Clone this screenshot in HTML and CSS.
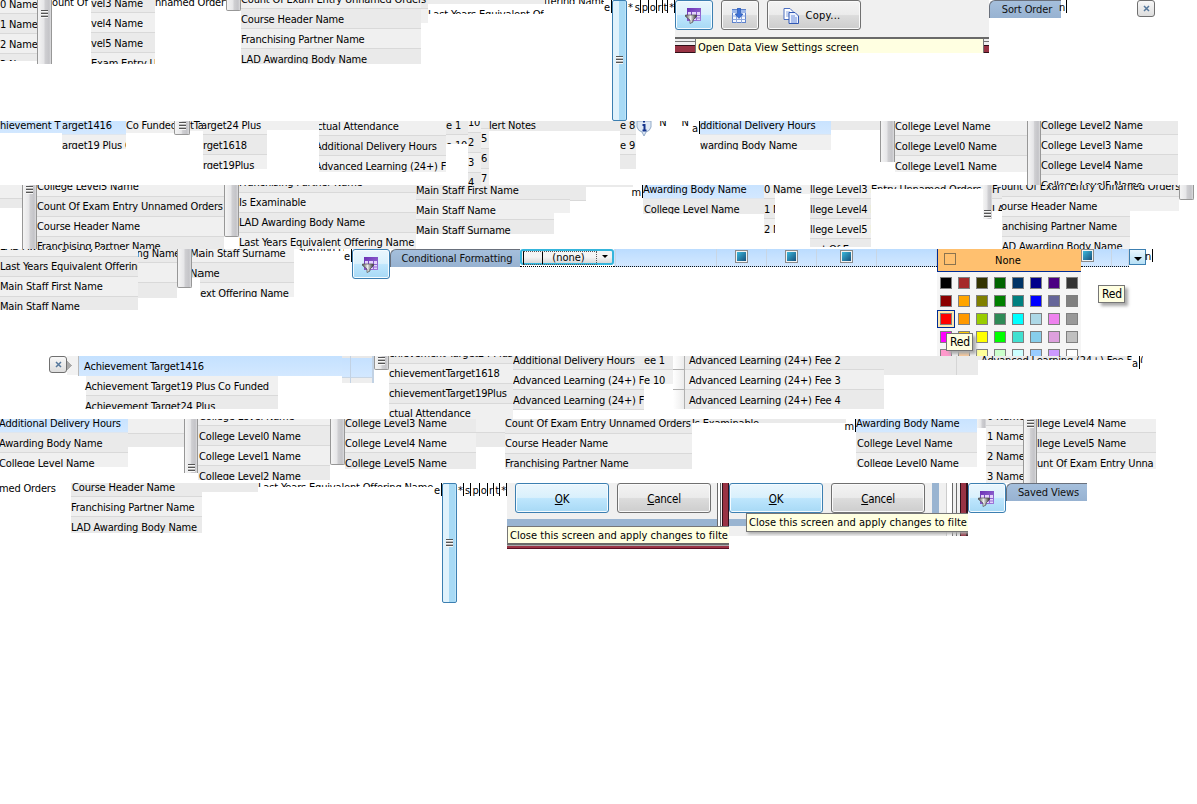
FILE: index.html
```html
<!DOCTYPE html>
<html lang="en">
<head>
<meta charset="utf-8">
<title>Data view filter parts</title>
<link rel="stylesheet" href="styles.css">
</head>
<body>
<svg width="0" height="0" class="defs">
  <defs>
    <linearGradient id="purple" x1="0" y1="0" x2="1" y2="1"><stop offset="0" stop-color="#6a2fb4"/><stop offset="1" stop-color="#9f7bdc"/></linearGradient>
    <linearGradient id="steel" x1="0" x2="1"><stop offset="0" stop-color="#555"/><stop offset=".45" stop-color="#eee"/><stop offset="1" stop-color="#333"/></linearGradient>
    <symbol id="filter" viewBox="0 0 16 16">
      <rect x="2" y="0" width="14" height="13" fill="url(#purple)"/>
      <path d="M3 4h3v3H3zM7 4h4v3H7zM12 4h3v3h-3zM12 8h3v1.500h-3zM12 10.500h3v1.500h-3zM8 10.500h3v1.500H8z" fill="#e3d3fa"/>
      <path d="M.5 7h11v1.500L8 12v2l-3 1.500V12L.5 8.500z" fill="url(#steel)" stroke="#4a4a4a" stroke-width=".7"/>
    </symbol>
    <symbol id="import" viewBox="0 0 16 16">
      <rect x="1.500" y="1.500" width="13" height="13" fill="#f4f8ff" stroke="#5f83cc"/>
      <path d="M1 2h14v3H1z" fill="#9db8ea"/>
      <path d="M1.500 8h13M1.500 11.500h13M5.500 5v10M10.500 5v10" stroke="#8da7dd"/>
      <path d="M6.500 0h3v6h2.500L8 10.500 4 6h2.500z" fill="#3f72d8" stroke="#2450a8" stroke-width=".6"/>
    </symbol>
    <symbol id="copy" viewBox="0 0 16 16">
      <path d="M1 .500h6l3 3v8H1z" fill="#fff" stroke="#4c6fc0"/>
      <path d="M3 4h4M3 6h5M3 8h5" stroke="#8da7e0"/>
      <path d="M6 4.500h6l3.500 3.500v7.500H6z" fill="#eef3ff" stroke="#3158b4"/>
      <path d="M8 8h4M8 10h6M8 12h6M8 14h6" stroke="#6a8cda"/>
    </symbol>
  </defs>
</svg>
<main class="sheet">

<section class="strip s0">
  <div class="tile h61"><div class="list alt u6"><p>0 Name</p><p>1 Name</p><p>2 Name</p><p>3 Name</p></div></div>
  <div class="bar h64"><i class="grip d9"></i></div>
  <div class="tile h6"><div class="list bare u8"><p>ount Of E</p></div></div>
  <div class="tile h64"><div class="list u7"><p>vel3 Name</p><p>vel4 Name</p><p>vel5 Name</p><p>Exam Entry Un</p></div></div>
  <div class="tile h6"><div class="list bare u8"><p>nnamed Order<sup>s</sup></p></div></div>
  <div class="bar end h11"></div>
  <div class="tile h64"><div class="list alt u11"><p>Count Of Exam Entry Unnamed Orders</p><p>Course Header Name</p><p>Franchising Partner Name</p><p>LAD Awarding Body Name</p></div></div>
  <div class="tile h23"><div class="list u11"><p>s</p><p></p></div></div>
  <div class="tile h14 capped"><div class="list bare"><p>Last Years Equivalent Of</p></div></div>
  <div class="tile h4"><div class="list bare u9"><p>ffering Name</p></div></div>
  <div class="caret"><b>e</b></div>
  <div class="bar blue h121"><i class="grip d56"></i></div>
  <div class="caret keys"><b class="no">*</b><b>s</b><b>p</b><b>o</b><b>r</b><b>t</b><b>*</b></div>
  <div class="toolbar">
    <div class="tools"><span class="btn hot w38"><svg class="ic"><use href="#filter"/></svg></span><span class="btn w38"><svg class="ic"><use href="#import"/></svg></span><span class="btn w94 copy"><svg class="ic"><use href="#copy"/></svg>Copy...</span></div>
    <div class="under"><div class="tip flat">Open Data View Settings screen</div></div>
  </div>
  <div class="tab">Sort Order</div>
  <div class="caret"><b>n</b></div>
  <div></div>
  <div class="close"><svg viewBox="0 0 7 7"><path d="M1 1l5 5M6 1L1 6"/></svg></div>
</section>

<section class="strip s1">
  <div class="tile h12"><div class="list u6"><p class="on">hievement T</p></div></div>
  <div class="tile h28"><div class="list u6"><p class="on">arget1416</p><p>arget19 Plus C</p></div></div>
  <div class="tile h12"><div class="list alt u6"><p>Co Funded</p></div></div>
  <div class="bar end h14"><i class="grip"></i></div>
  <div class="tile h10"><div class="list alt u6"><p>tTa</p></div></div>
  <div class="tile h48"><div class="list alt u6"><p class="n2">arget24 Plus</p><p>rget1618</p><p>rget19Plus</p></div></div>
  <div class="tile h9"><div class="list alt u5"><p></p></div></div>
  <div class="tile h51"><div class="list alt u5"><p class="n2">ctual Attendance</p><p class="n3">Additional Delivery Hours</p><p class="n3">Advanced Learning (24+) Fee</p></div></div>
  <div class="tile h23"><div class="list u6"><p>e 1</p><p>e 10</p></div></div>
  <div class="tile h64"><div class="list alt tight u8"><p>10</p><p>2</p><p>3</p><p>4</p></div></div>
  <div class="tile h64"><div class="list tight u12"><p>*</p><p>5</p><p>6</p><p>7</p></div></div>
  <div class="tile h10"><div class="list u6"><p>lert Notes</p></div></div>
  <div class="tile h48"><div class="list u6"><p>e 8</p><p>e 9</p><p></p></div></div>
  <div class="info"><svg viewBox="0 0 16 16"><path d="M1 0h14v6q-1 4-5 5l-2 4-2-4Q2 10 1 6z" fill="#dfe9f5" stroke="#93abc8"/><path d="M8 0v1.500M6.500 4H8.500v6M6.500 9.500h4" stroke="#14348c" stroke-width="2" fill="none"/></svg></div>
  <div class="tile h5"><div class="list bare u9"><p>" N &nbsp; &nbsp; N</p></div></div>
  <div class="caret"><b>a</b></div>
  <div class="tile h29"><div class="list u6"><p class="on">dditional Delivery Hours</p><p>warding Body Name</p></div></div>
  <div class="tile h9"><div class="list u5"><p></p></div></div>
  <div class="bar h41"></div>
  <div class="tile h51"><div class="list alt u5"><p>College Level Name</p><p>College Level0 Name</p><p>College Level1 Name</p></div></div>
  <div class="bar h64"></div>
  <div class="tile h64"><div class="list u6"><p>College Level2 Name</p><p>College Level3 Name</p><p>College Level4 Name</p><p>College Level5 Name</p></div></div>
</section>

<section class="strip s2">
  <div class="tile h23"><div class="list alt u6"><p></p><p></p></div></div>
  <div class="bar h64"><i class="grip"></i></div>
  <div class="tile h64"><div class="list alt tight u8"><p>College Level5 Name</p><p>Count Of Exam Entry Unnamed Orders</p><p>Course Header Name</p><p>Franchising Partner Name</p></div></div>
  <div class="bar end h52"></div>
  <div class="tile h64"><div class="list tight u12"><p>Franchising Partner Name</p><p>Is Examinable</p><p>LAD Awarding Body Name</p><p>Last Years Equivalent Offering Name</p></div></div>
  <div class="tile h49"><div class="list u5"><p>Main Staff First Name</p><p>Main Staff Name</p><p>Main Staff Surname</p></div></div>
  <div class="tile h28"><div class="list u5"><p></p><p></p></div></div>
  <div class="tile h16"><div class="list u4"><p></p></div></div>
  <div class="tile h2"><div class="list u5"><p></p></div></div>
  <div class="caret"><b>m</b></div>
  <div class="tile h29"><div class="list alt u6"><p class="on">Awarding Body Name</p><p class="p1">College Level Name</p></div></div>
  <div class="tile h48"><div class="list alt u6"><p>0 Name</p><p>1 Name</p><p>2 Name</p></div></div>
  <div class="tile h9"><div class="list alt u6"><p class="n11">0 Name</p></div></div>
  <div class="tile h62"><div class="list alt u6"><p>llege Level3 Name</p><p>llege Level4 Name</p><p>llege Level5 Name</p><p>unt Of Exam</p></div></div>
  <div class="tile h4"><div class="list alt u6"><p>Entry Unnamed Orders</p></div></div>
  <div class="bar slim h34"><i class="grip d25"></i></div>
  <div class="tile h26"><div class="list u6"><p>Fr</p><p>LA</p></div></div>
  <div class="tile h64"><div class="list tight u8"><p class="n1">ount Of Exam Entry Unnamed Orders</p><p class="n1">ourse Header Name</p><p>anchising Partner Name</p><p>AD Awarding Body Name</p></div></div>
  <div class="tile h26"><div class="list tight u8"><p class="n128">ount Of Exam Entry Unnamed Orders</p><p></p></div></div>
  <div class="bar end h15"></div>
</section>

<section class="strip s3">
  <div class="tile h61"><div class="list alt tight u12"><p>LAD Awarding Body Name</p><p>Last Years Equivalent Offering</p><p>Main Staff First Name</p><p>Main Staff Name</p></div></div>
  <div class="tile h49"><div class="list u6"><p class="n3">ing Name</p><p></p><p></p></div></div>
  <div class="bar end h39"></div>
  <div class="tile h29"><div class="list alt u6"><p class="n2">Main</p><p class="n2">Name</p></div></div>
  <div class="tile h48"><div class="list alt u6"><p class="n10">Main Staff Surname</p><p class="n10">Name</p><p class="n6">Next Offering Name</p></div></div>
  <div class="tile h2"><div class="list bare u10"><p class="p3">Starting Date</p></div></div>
  <div class="caret"><b>e</b></div>
  <span class="btn hot"><svg class="ic"><use href="#filter"/></svg></span>
  <div class="tab">Conditional Formatting</div>
  <div class="combo-cell"><div class="combo"><span>(none)</span></div></div>
  <div class="gridrow main"><i></i><i></i><i><s></s></i><i><s></s></i><i><s></s></i><i></i></div>
  <div class="palette">
    <div class="none"><i></i><span>None</span></div>
    <div class="swatches">
      <i class="c01"></i><i class="c02"></i><i class="c03"></i><i class="c04"></i><i class="c05"></i><i class="c06"></i><i class="c07"></i><i class="c08"></i>
      <i class="c09"></i><i class="c10"></i><i class="c11"></i><i class="c12"></i><i class="c13"></i><i class="c14"></i><i class="c15"></i><i class="c16"></i>
      <i class="c17 picked"></i><i class="c18"></i><i class="c19"></i><i class="c20"></i><i class="c21"></i><i class="c22"></i><i class="c23"></i><i class="c24"></i>
      <i class="c25"></i><i class="c26"></i><i class="c27"></i><i class="c28"></i><i class="c29"></i><i class="c30"></i><i class="c31"></i><i class="c32"></i>
      <i class="c33"></i><i class="c34"></i><i class="c35"></i><i class="c36"></i><i class="c37"></i><i class="c38"></i><i class="c39"></i><i class="c40"></i>
    </div>
    <div class="tip small over">Red</div>
  </div>
  <div class="tailcell"><div class="gridrow tail"><i><s></s></i><i></i></div><div class="tip small alone">Red</div></div>
  <div class="drop"></div>
  <div class="caret"><b>n</b></div>
</section>

<section class="strip s4">
  <div></div>
  <div class="close"><svg viewBox="0 0 7 7"><path d="M1 1l5 5M6 1L1 6"/></svg></div>
  <div class="marker"></div>
  <div class="tile h53 wide1"><div class="list"><p class="on first">Achievement Target1416</p><p>Achievement Target19 Plus Co Funded</p><p>Achievement Target24 Plus</p></div></div>
  <div class="cells"></div>
  <div class="bar end h14"><i class="grip"></i></div>
  <div class="tile h63"><div class="list tight u12"><p>chievement Target24 Plus</p><p>chievementTarget1618</p><p>chievementTarget19Plus</p><p>ctual Attendance</p></div></div>
  <div class="tile h54"><div class="list u6"><p>Additional Delivery Hours</p><p>Advanced Learning (24+) Fee 10</p><p>Advanced Learning (24+) F</p></div></div>
  <div class="tile h28"><div class="list u6"><p>ee 1</p><p>e 10</p></div></div>
  <div class="nubs"><i></i><i></i><i></i></div>
  <div class="tile h53"><div class="list u6"><p class="p4">Advanced Learning (24+) Fee 2</p><p class="p4">Advanced Learning (24+) Fee 3</p><p class="p4">Advanced Learning (24+) Fee 4</p></div></div>
  <div class="slab"></div>
  <div class="tile h4"><div class="list u6"><p class="p3">Advanced Learning (24+) Fee 5</p></div></div>
  <div class="caret"><b>a</b></div>
  <div class="tile h7"><div class="list bare u6"><p>(</p></div></div>
</section>

<section class="strip s5">
  <div class="tile h48"><div class="list alt u6"><p class="on n1">Additional Delivery Hours</p><p class="n1">Awarding Body Name</p><p class="n1">College Level Name</p></div></div>
  <div class="tile h28"><div class="list alt u5"><p></p><p></p></div></div>
  <div class="bar h54"><i class="grip d45"></i></div>
  <div class="tile h61"><div class="list alt u13"><p class="p1">College Level Name</p><p class="p1">College Level0 Name</p><p class="p1">College Level1 Name</p><p class="p1">College Level2 Name</p></div></div>
  <div class="bar end h46"></div>
  <div class="tile h50"><div class="list u6"><p>College Level3 Name</p><p>College Level4 Name</p><p>College Level5 Name</p></div></div>
  <div class="tile h28"><div class="list alt u6"><p></p><p></p></div></div>
  <div class="tile h50"><div class="list tight u5"><p>Count Of Exam Entry Unnamed Orders</p><p>Course Header Name</p><p>Franchising Partner Name</p></div></div>
  <div class="tile h4"><div class="list u6"><p>Is Examinable</p></div></div>
  <div class="caret"><b>m</b></div>
  <div class="tile h48"><div class="list alt u6"><p class="on">Awarding Body Name</p><p class="p1">College Level Name</p><p class="p1">College Level0 Name</p></div></div>
  <div class="bar slim h9"></div>
  <div class="tile h64"><div class="list u13"><p class="p1">0 Name</p><p class="p1">1 Name</p><p class="p1">2 Name</p><p class="p1">3 Name</p></div></div>
  <div class="bar h64"><i class="grip"></i></div>
  <div class="tile h50"><div class="list alt u6"><p>llege Level4 Name</p><p>llege Level5 Name</p><p>unt Of Exam Entry Unna</p></div></div>
</section>

<section class="strip s6">
  <div class="tile h12"><div class="list bare u5"><p class="n1">med Orders</p></div></div>
  <div class="tile h50"><div class="list u6"><p class="p1">Course Header Name</p><p>Franchising Partner Name</p><p>LAD Awarding Body Name</p></div></div>
  <div class="tile h9"><div class="list u6"><p></p></div></div>
  <div class="tile h4"><div class="list bare u6"><p>Last Years Equivalent Offering Name</p></div></div>
  <div class="caret"><b>e</b></div>
  <div class="bar blue h120"><i class="grip d56"></i></div>
  <div class="caret keys"><b>*</b><b>s</b><b>p</b><b>o</b><b>r</b><b>t</b><b>*</b></div>
  <div class="dialog one"><div class="tools"><span class="btn hot w94"><span><u>O</u>K</span></span><span class="btn w94"><span><u>C</u>ancel</span></span></div><div class="band"></div><div class="tip row">Close this screen and apply changes to filte</div><div class="edge"></div><div class="stripes"></div></div>
  <div class="dialog two"><div class="tools"><span class="btn hot w94"><span><u>O</u>K</span></span><span class="btn w94"><span><u>C</u>ancel</span></span></div><div class="band"></div><div class="vband"></div><div class="stripes"></div><div class="tip over2">Close this screen and apply changes to filte</div></div>
  <span class="btn hot"><svg class="ic"><use href="#filter"/></svg></span>
  <div class="tab">Saved Views</div>
</section>
</main>
</body>
</html>
```
FILE: styles.css
```css
* { box-sizing: border-box; }
body { margin: 0; background: #fff; color: #000; font: 11px/19px "DejaVu Sans Condensed", "DejaVu Sans", sans-serif; letter-spacing: -0.17px; overflow: hidden; }
p { margin: 0; }
i, s, b { font-style: normal; text-decoration: none; font-weight: normal; }
.defs { display: block; width: 0; height: 0; }
.sheet { width: 1197px; height: 804px; overflow: hidden; }

.strip { display: grid; align-items: start; overflow: hidden; }
.s0 { height: 121px; grid-template-columns: 37px 15px 39px 64px 71px 15px 180px 7px 116px 60px 8px 15px 48px 314px 72px 6px 70px 18px; }
.s1 { height: 64px; grid-template-columns: 62px 64px 48px 16px 13px 64px 52px 127px 22px 13px 8px 131px 16px 16px 41px 7px 131px 49px 15px 132px 14px 137px; }
.s2 { height: 64px; grid-template-columns: 22px 15px 187px 15px 177px 138px 16px 16px 47px 10px 121px 11px 35px 61px 112px 9px 10px 128px 49px 15px; }
.s3 { height: 107px; grid-template-columns: 138px 39px 15px 8px 94px 50px 8px 38px 130px 94px 323px 144px 48px 17px 7px; }
.s4 { height: 63px; grid-template-columns: 49px 18px 11px 264px 32px 15px 124px 131px 29px 12px 199px 94px 154px 8px 3px; }
.s5 { height: 64px; grid-template-columns: 128px 56px 14px 132px 15px 131px 29px 187px 154px 10px 121px 9px 37px 14px 119px; }
.s6 { height: 121px; grid-template-columns: 71px 131px 56px 176px 8px 15px 50px 222px 239px 38px 81px; }

/* clipped list fragments */
.tile { overflow: hidden; white-space: nowrap; min-width: 0; }
.list { display: flex; flex-direction: column; line-height: 21px; }
.list.tight { line-height: 19px; }
.list p { height: 20px; flex: none; border-bottom: 1px solid #d9d9d9; background: #eaeaea; }
.list p:nth-child(even), .list.alt p { background: #f0f0f0; }
.list.alt p:nth-child(even) { background: #eaeaea; }
.list.bare p { background: #fff; border-color: #fff; }
.list p.on { background: linear-gradient(#c4e1ff, #d3e8ff); border-color: #dfe6ee; }
.list sup { font-size: 9px; line-height: 1px; }
.capped { border-top: 4px solid #ececec; }
.p1 { padding-left: 1px; }
.p3 { padding-left: 3px; }
.p4 { padding-left: 4px; }
.n1 { text-indent: -1px; }
.n2 { text-indent: -2px; }
.n3 { text-indent: -4px; }
.n6 { text-indent: -7px; }
.n10 { text-indent: -9px; }
.n11 { text-indent: -11px; }
.n128 { text-indent: -129px; }

.u4 { margin-top: -4px; }
.u5 { margin-top: -5px; }
.u6 { margin-top: -6px; }
.u7 { margin-top: -7px; }
.u8 { margin-top: -8px; }
.u9 { margin-top: -9px; }
.u10 { margin-top: -10px; }
.u11 { margin-top: -11px; }
.u12 { margin-top: -12px; }
.u13 { margin-top: -13px; }
.h2 { height: 2px; }
.h4 { height: 4px; }
.h5 { height: 5px; }
.h6 { height: 6px; }
.h7 { height: 7px; }
.h9 { height: 9px; }
.h10 { height: 10px; }
.h11 { height: 11px; }
.h12 { height: 12px; }
.h14 { height: 14px; }
.h15 { height: 15px; }
.h16 { height: 16px; }
.h23 { height: 23px; }
.h26 { height: 26px; }
.h28 { height: 28px; }
.h29 { height: 29px; }
.h34 { height: 34px; }
.h39 { height: 39px; }
.h41 { height: 41px; }
.h46 { height: 46px; }
.h48 { height: 48px; }
.h49 { height: 49px; }
.h50 { height: 50px; }
.h51 { height: 51px; }
.h52 { height: 52px; }
.h53 { height: 53px; }
.h54 { height: 54px; }
.h61 { height: 61px; }
.h62 { height: 62px; }
.h63 { height: 63px; }
.h64 { height: 64px; }
.h120 { height: 120px; }
.h121 { height: 121px; }

/* scrollbars */
.bar { display: flex; justify-content: center; overflow: hidden; border: solid #979797; border-width: 0 1px; background: linear-gradient(90deg, #f4f4f4, #e6e6e8 45%, #cfcfd2 55%, #c4c4c8 85%, #dcdcde); }
.bar.end { border-bottom-width: 1px; border-radius: 0 0 2px 2px; }
.bar.slim { border-width: 0; }
.bar.blue { border: 1px solid #3c7fb1; border-radius: 2px; background: linear-gradient(90deg, #e0f2fc 45%, #a8daf5 50%, #a8daf5 90%, #d0ecfa); }
.grip { flex: none; width: 7px; height: 8px; margin-top: 1px; background: repeating-linear-gradient(#555 0 1px, #f8f8f8 1px 2px, #bbb 2px 3px); }
.grip.d9 { margin-top: 10px; }
.grip.d25 { margin-top: 25px; }
.grip.d45 { margin-top: 45px; }
.grip.d56 { margin-top: 55px; }

/* typed characters with their text cursors */
.caret { display: flex; justify-content: flex-end; height: 17px; margin-top: -2px; }
.caret b { background: linear-gradient(#000, #000) 100% 2px / 1px 13px no-repeat; padding-right: 2px; }
.caret.keys { justify-content: space-between; padding-left: 1px; }
.caret.keys b { padding-right: 1px; }
.caret b.no { background: none; }

/* buttons */
.btn { display: flex; align-items: center; justify-content: center; gap: 5px; height: 30px; line-height: 16px; border: 1px solid #707070; border-radius: 3px; background: linear-gradient(#f3f3f3, #ebebeb 48%, #dcdcdc 52%, #cdcdcd); box-shadow: inset 0 0 0 1px #fafafa; letter-spacing: 0; padding-top: 1px; }
.btn.hot { border-color: #3c7fb1; background: linear-gradient(#eaf6fd, #d9f0fc 48%, #bee6fd 52%, #a7d9f5); box-shadow: inset 0 0 0 1px #f4fbff; }
.btn.copy { gap: 4px; letter-spacing: .3px; padding-right: 4px; }
.btn.copy { padding-top: 2px; }
.w38 { width: 38px; }
.w94 { width: 94px; }
.ic { width: 16px; height: 16px; margin-right: 2px; }
.tools { display: flex; gap: 8px; }
.toolbar { height: 53px; background: #f0f0f0; overflow: hidden; }
.toolbar .tools { height: 37px; }
.under { height: 16px; border-top: 2px solid #696969; padding-left: 20px; background: linear-gradient(#f0f0f0 2px, #777 2px 3px, #f0f0f0 3px 6px, #301018 6px 7px, #993344 7px 13px, #301018 13px); }
.tip { background: #ffffe1; color: #000; border: 1px solid #767676; letter-spacing: .04px; white-space: nowrap; overflow: hidden; line-height: 17px; padding-left: 2px; }
.tip.flat { width: 289px; height: 14px; border-width: 0 1px; line-height: 17px; }
.tab { height: 18px; line-height: 18px; text-align: center; color: #111; border: solid #69707c; border-width: 1px 0 0 1px; border-radius: 6px 0 0 0; background: linear-gradient(#a5bfdc, #97b2d1); letter-spacing: -.1px; padding-left: 3px; }
.close { display: flex; align-items: center; justify-content: center; height: 17px; border: 1px solid #707070; border-radius: 3px; background: linear-gradient(#f8f8f8, #ddd); }
.close svg { width: 7px; height: 7px; stroke: #56789c; stroke-width: 1.500; fill: none; }
.info { height: 16px; }
.info svg { display: block; width: 16px; height: 16px; }

/* formatting row */
.combo-cell { height: 18px; border-bottom: 1px dotted #000; }
.combo { position: relative; height: 16px; border: 2px solid #35b5dc; border-radius: 3px; background: linear-gradient(#f4f4f4 50%, #d8d8d8); text-align: center; line-height: 14px; padding-left: 3px; letter-spacing: 0; }
.combo::before { content: ""; position: absolute; left: 1px; top: 0; width: 72px; height: 12px; border: 1px dotted #555; border-left: 1px solid #000; background: linear-gradient(#000, #000) 18px 0 / 1px 12px no-repeat; }
.combo::after { content: ""; position: absolute; right: 4px; top: 4px; border: 3px solid transparent; border-top-color: #000; }
.gridrow { display: grid; height: 18px; background: linear-gradient(#bbdcff, #d3e8ff); border-bottom: 1px dotted #111; }
.gridrow.main { grid-template-columns: 2px 101px 50px 50px 60px 1fr; }
.gridrow.tail { grid-template-columns: 31px 1fr; }
.gridrow i { display: flex; justify-content: center; padding-top: 1px; border-right: 1px solid #c9d6e4; }
.gridrow.tail i:first-child { justify-content: flex-start; padding-top: 0; }
.gridrow s { width: 13px; height: 13px; border: 1px solid #8a8a8a; background: linear-gradient(135deg, #3bb8dc, #17507c) 50% / 9px 9px no-repeat #f2f2f2; }
.drop { display: flex; justify-content: center; height: 16px; border: 1px solid #3c7fb1; background: linear-gradient(#e9f6fd, #b7e0f6); padding-top: 7px; }
.drop::after { content: ""; height: 0; border: 4px solid transparent; border-top-color: #000; }
.tailcell { height: 107px; }
.tip.small { width: 27px; height: 18px; letter-spacing: -.2px; line-height: 17px; padding-left: 3px; font-size: 12px; overflow: visible; box-shadow: 3px 3px 3px #aaa; }
.tip.alone { margin: 18px 0 0 17px; position: relative; }
.palette { position: relative; height: 107px; overflow: hidden; background: #f5f5f5; }
.none { display: flex; align-items: center; height: 23px; border: solid #002d96; border-width: 0 0 1px 1px; background: #ffc06f; padding-left: 6px; padding-bottom: 2px; }
.none i { width: 12px; height: 12px; border: 1px solid #8a7350; }
.none span { padding: 2px 0 0 39px; letter-spacing: 0; }
.swatches { display: grid; grid-template-columns: repeat(8, 12px); gap: 6px; padding: 5px 0 0 3px; }
.swatches i { height: 12px; border: 1px solid #808080; }
.swatches .picked { box-shadow: 0 0 0 2px #ffe8b0, 0 0 0 3px #002d96; }
.over { position: absolute; left: 9px; top: 84px; }
.c01 { background: #000; } .c02 { background: #a52a2a; } .c03 { background: #333300; } .c04 { background: #006400; }
.c05 { background: #003366; } .c06 { background: #00008b; } .c07 { background: #4b0082; } .c08 { background: #333; }
.c09 { background: #8b0000; } .c10 { background: #ffa500; } .c11 { background: #808000; } .c12 { background: #008000; }
.c13 { background: #008080; } .c14 { background: #00f; } .c15 { background: #666699; } .c16 { background: #808080; }
.c17 { background: #f00; } .c18 { background: #ff9900; } .c19 { background: #99cc00; } .c20 { background: #2e8b57; }
.c21 { background: #0ff; } .c22 { background: #add8e6; } .c23 { background: #ee82ee; } .c24 { background: #999; }
.c25 { background: #f0f; } .c26 { background: #ffcc00; } .c27 { background: #ff0; } .c28 { background: #0f0; }
.c29 { background: #40e0d0; } .c30 { background: #87ceeb; } .c31 { background: #dda0dd; } .c32 { background: #c0c0c0; }
.c33 { background: #ff99cc; } .c34 { background: #ffcc99; } .c35 { background: #ffff99; } .c36 { background: #ccffcc; }
.c37 { background: #ccffff; } .c38 { background: #99ccff; } .c39 { background: #cc99ff; } .c40 { background: #fff; }

/* achievement list */
.marker { height: 19px; background: conic-gradient(from 225deg at 5px 50%, #aaa 90deg, #f2f2f2 0) 0 4px / 6px 10px no-repeat #f2f2f2; }
.wide1 p { width: 192px; margin-left: 8px; text-indent: -1px; }
.wide1 p.first { width: auto; margin-left: 0; text-indent: 5px; border-left: 1px solid #bbb; border-bottom: 0; }
.cells { height: 27px; background: linear-gradient(90deg, transparent 8px, #c2d2e4 8px 9px, transparent 9px 30px, #c2d2e4 30px), linear-gradient(#e8e8e8 2px, #c5e1ff 2px, #d3e8ff 21px, #c9d6e4 21px 22px, #eee 22px); }
.nubs i { display: block; height: 20px; border: solid #b0b0b0; border-width: 0 1px 1px 0; background: linear-gradient(90deg, #fff, #ececec); }
.nubs { height: 53px; overflow: hidden; }
.nubs i:first-child { height: 14px; }
.slab { height: 19px; background: linear-gradient(90deg, transparent 72px, #d5d5d5 72px 73px, transparent 73px), #eaeaea; }

/* dialog corners */
.dialog { position: relative; overflow: hidden; background: #f0f0f0; }
.dialog .btn { font-size: 11.5px; letter-spacing: -.25px; padding-top: 2px; }
.dialog .tools { height: 36px; }
.dialog .band { height: 7px; background: #99b4d1; }
.one { height: 66px; }
.one .tools { padding-left: 8px; }
.one .band { width: 210px; }
.one .tip { height: 19px; border-width: 1px 0 2px 1px; border-bottom-color: #696969; position: relative; z-index: 1; }
.one .edge { height: 4px; background: linear-gradient(#aaa 1px, #993344 1px 3px, #5a1022 3px); }
.one .stripes { position: absolute; right: 0; top: 0; width: 12px; height: 43px; background: linear-gradient(90deg, #696969 1px, #fff 1px 3px, #696969 3px 4px, #f0f0f0 4px 5px, #301018 5px 6px, #993344 6px 11px, #301018 11px); }
.two { height: 53px; }
.two .band { width: 20px; }
.vband { position: absolute; left: 203px; top: 0; width: 7px; height: 30px; background: #99b4d1; }
.two .stripes { position: absolute; right: 0; top: 0; width: 22px; height: 53px; background: linear-gradient(90deg, #ccc 1px, #fff 1px 6px, #696969 6px 7px, #f0f0f0 7px 10px, #696969 10px 11px, #f0f0f0 11px 14px, #301018 14px 15px, #993344 15px 20px, #301018 20px); }
.over2 { position: absolute; left: 17px; top: 30px; width: 222px; height: 19px; border-right: 0; box-shadow: 2px 2px 3px #aaa; }
```
